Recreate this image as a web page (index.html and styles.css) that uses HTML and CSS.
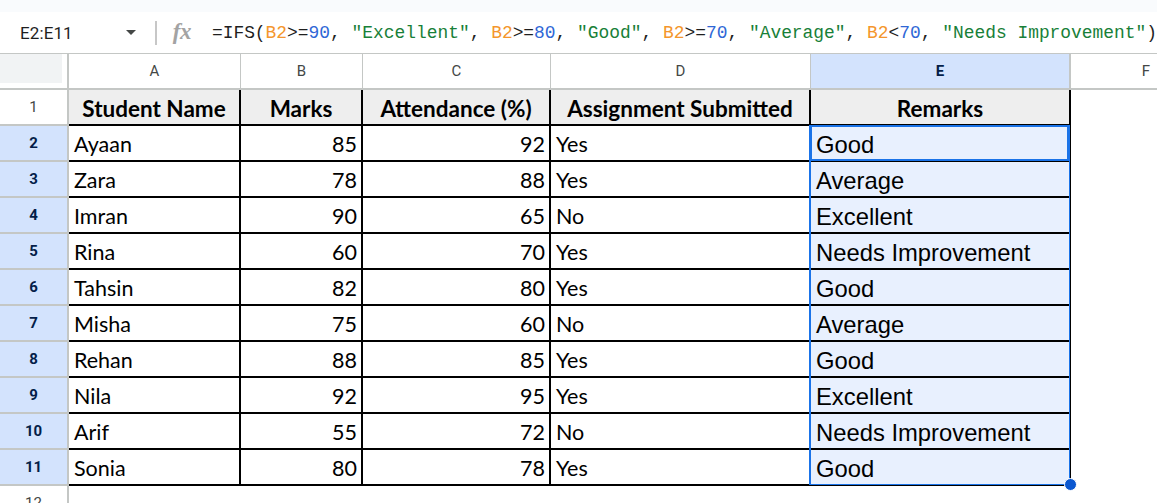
FILE: index.html
```html
<!DOCTYPE html>
<html>
<head>
<meta charset="utf-8">
<link rel="stylesheet" href="styles.css">
</head>
<body>
<div class="app">
  <div class="topstrip"></div>
  <div class="fbar">
    <div class="namebox">
      <span class="ref">E2:E11</span>
      <svg class="caret" width="10" height="5" viewBox="0 0 10 5"><path d="M0 0h10L5 5z" fill="#444746"/></svg>
    </div>
    <div class="sep"></div>
    <span class="fx">fx</span>
    <div class="formula">=IFS(<span class="r">B2</span>&gt;=<span class="n">90</span>, <span class="s">"Excellent"</span>, <span class="r">B2</span>&gt;=<span class="n">80</span>, <span class="s">"Good"</span>, <span class="r">B2</span>&gt;=<span class="n">70</span>, <span class="s">"Average"</span>, <span class="r">B2</span>&lt;<span class="n">70</span>, <span class="s">"Needs Improvement"</span>)</div>
  </div>

  <div class="sheet">
    <div class="corner"><div class="corner-box"></div></div>
    <div class="ch">A</div>
    <div class="ch">B</div>
    <div class="ch">C</div>
    <div class="ch">D</div>
    <div class="ch ch-sel">E</div>
    <div class="ch ch-last">F</div>

    <div class="rh">1</div>
    <div class="c hd">Student Name</div>
    <div class="c hd">Marks</div>
    <div class="c hd">Attendance (%)</div>
    <div class="c hd">Assignment Submitted</div>
    <div class="c hd">Remarks</div>
    <div class="c empty"></div>

    <div class="rh rh-sel">2</div>
    <div class="c">Ayaan</div><div class="c num">85</div><div class="c num">92</div><div class="c">Yes</div>
    <div class="c rem anchor">Good<div class="range"><div class="handle"></div></div><div class="active"></div></div>
    <div class="c empty"></div>

    <div class="rh rh-sel">3</div>
    <div class="c">Zara</div><div class="c num">78</div><div class="c num">88</div><div class="c">Yes</div><div class="c rem">Average</div><div class="c empty"></div>

    <div class="rh rh-sel">4</div>
    <div class="c">Imran</div><div class="c num">90</div><div class="c num">65</div><div class="c">No</div><div class="c rem">Excellent</div><div class="c empty"></div>

    <div class="rh rh-sel">5</div>
    <div class="c">Rina</div><div class="c num">60</div><div class="c num">70</div><div class="c">Yes</div><div class="c rem">Needs Improvement</div><div class="c empty"></div>

    <div class="rh rh-sel">6</div>
    <div class="c">Tahsin</div><div class="c num">82</div><div class="c num">80</div><div class="c">Yes</div><div class="c rem">Good</div><div class="c empty"></div>

    <div class="rh rh-sel">7</div>
    <div class="c">Misha</div><div class="c num">75</div><div class="c num">60</div><div class="c">No</div><div class="c rem">Average</div><div class="c empty"></div>

    <div class="rh rh-sel">8</div>
    <div class="c">Rehan</div><div class="c num">88</div><div class="c num">85</div><div class="c">Yes</div><div class="c rem">Good</div><div class="c empty"></div>

    <div class="rh rh-sel">9</div>
    <div class="c">Nila</div><div class="c num">92</div><div class="c num">95</div><div class="c">Yes</div><div class="c rem">Excellent</div><div class="c empty"></div>

    <div class="rh rh-sel">10</div>
    <div class="c">Arif</div><div class="c num">55</div><div class="c num">72</div><div class="c">No</div><div class="c rem">Needs Improvement</div><div class="c empty"></div>

    <div class="rh rh-sel">11</div>
    <div class="c">Sonia</div><div class="c num">80</div><div class="c num">78</div><div class="c">Yes</div><div class="c rem">Good</div><div class="c empty"></div>

    <div class="rh">12</div>
    <div class="c empty"></div><div class="c empty"></div><div class="c empty"></div><div class="c empty"></div><div class="c empty"></div><div class="c empty"></div>
  </div>
</div>
</body>
</html>
```

FILE: styles.css
```css
* { box-sizing: border-box; }
html, body { margin: 0; padding: 0; }
body {
  width: 1157px;
  height: 503px;
  overflow: hidden;
  background: #ffffff;
  font-family: Roboto, "Liberation Sans", Arial, sans-serif;
}
.app { width: 1157px; }

.topstrip {
  height: 12px;
  background: #f9fbfd;
}

.fbar {
  height: 42px;
  border-bottom: 1px solid #c4c7c5;
  background: #ffffff;
  display: flex;
  align-items: center;
}
.namebox {
  width: 145px;
  height: 100%;
  display: flex;
  align-items: center;
  padding-left: 20px;
  padding-right: 6px;
}
.ref {
  font-size: 17px;
  color: #1f1f1f;
  letter-spacing: 0.1px;
}
.caret { margin-left: auto; }
.sep {
  width: 2px;
  height: 24px;
  background: #c7c7c7;
  margin-left: 13px;
}
.fx {
  font-family: "Liberation Serif", serif;
  font-style: italic;
  font-weight: bold;
  font-size: 23px;
  color: #a3a3a3;
  margin-left: 16px;
  letter-spacing: -0.5px;
  line-height: 1;
  margin-top: -2px;
}
.formula {
  margin-left: 21px;
  margin-top: 1px;
  font-family: "Liberation Mono", "DejaVu Sans Mono", monospace;
  font-size: 17.9px;
  color: #1f1f1f;
  white-space: pre;
}
.formula .r { color: #f4962c; }
.formula .n { color: #2f67d6; }
.formula .s { color: #188038; }

.sheet {
  display: grid;
  grid-template-columns: 69px 172px 122px 188px 260px 260px 150px;
  grid-auto-rows: 36px;
  width: 1221px;
}

.corner {
  background: #ffffff;
  border-right: 2px solid #c4c7c5;
  border-bottom: 2px solid #c4c7c5;
}
.corner-box {
  width: 62px;
  height: 29px;
  background: #f1f3f4;
}

.ch {
  display: flex;
  align-items: center;
  justify-content: center;
  font-size: 15px;
  color: #444746;
  background: #ffffff;
  border-right: 1px solid #c4c7c5;
  border-bottom: 2px solid #c4c7c5;
}
.ch-sel {
  background: #d3e3fd;
  color: #041e49;
  font-weight: bold;
  border-right: 2px solid #c4c7c5;
}
.ch-last { border-right: none; }

.rh {
  display: flex;
  align-items: center;
  justify-content: center;
  font-size: 15px;
  color: #444746;
  background: #ffffff;
  border-right: 2px solid #c4c7c5;
  border-bottom: 2px solid #c4c7c5;
}
.rh-sel {
  background: #d3e3fd;
  color: #041e49;
  font-weight: bold;
}

.c {
  display: flex;
  align-items: center;
  padding: 2px 5px 0 5px;
  font-family: Lato, "Open Sans", sans-serif;
  font-size: 21.5px;
  color: #000000;
  white-space: nowrap;
  overflow: hidden;
  border-right: 2px solid #000000;
  border-bottom: 2px solid #000000;
}
.c.hd {
  background: #eeeeee;
  font-weight: bold;
  font-size: 22.5px;
  justify-content: center;
}
.c.num {
  justify-content: flex-end;
  padding-right: 4px;
}
.c.rem {
  background: #e8f0fe;
  font-family: "Liberation Sans", Arial, sans-serif;
  font-size: 23.8px;
  padding-top: 3px;
  padding-left: 5px;
  overflow: visible;
}
.c.anchor { position: relative; }
.c.empty {
  border: none;
  background: #ffffff;
}

.range {
  position: absolute;
  left: -2px;
  top: -1px;
  width: 261px;
  height: 360px;
  border-left: 2px solid #1a73e8;
  border-right: 1px solid #1a73e8;
  border-bottom: 1px solid #1a73e8;
  pointer-events: none;
}
.handle {
  position: absolute;
  right: -8px;
  bottom: -7px;
  width: 13px;
  height: 13px;
  border-radius: 50%;
  background: #0b57d0;
  border: 1px solid #ffffff;
}
.active {
  position: absolute;
  left: -1px;
  top: -1px;
  width: 259px;
  height: 36px;
  border: 2px solid #1a73e8;
  pointer-events: none;
}
```
